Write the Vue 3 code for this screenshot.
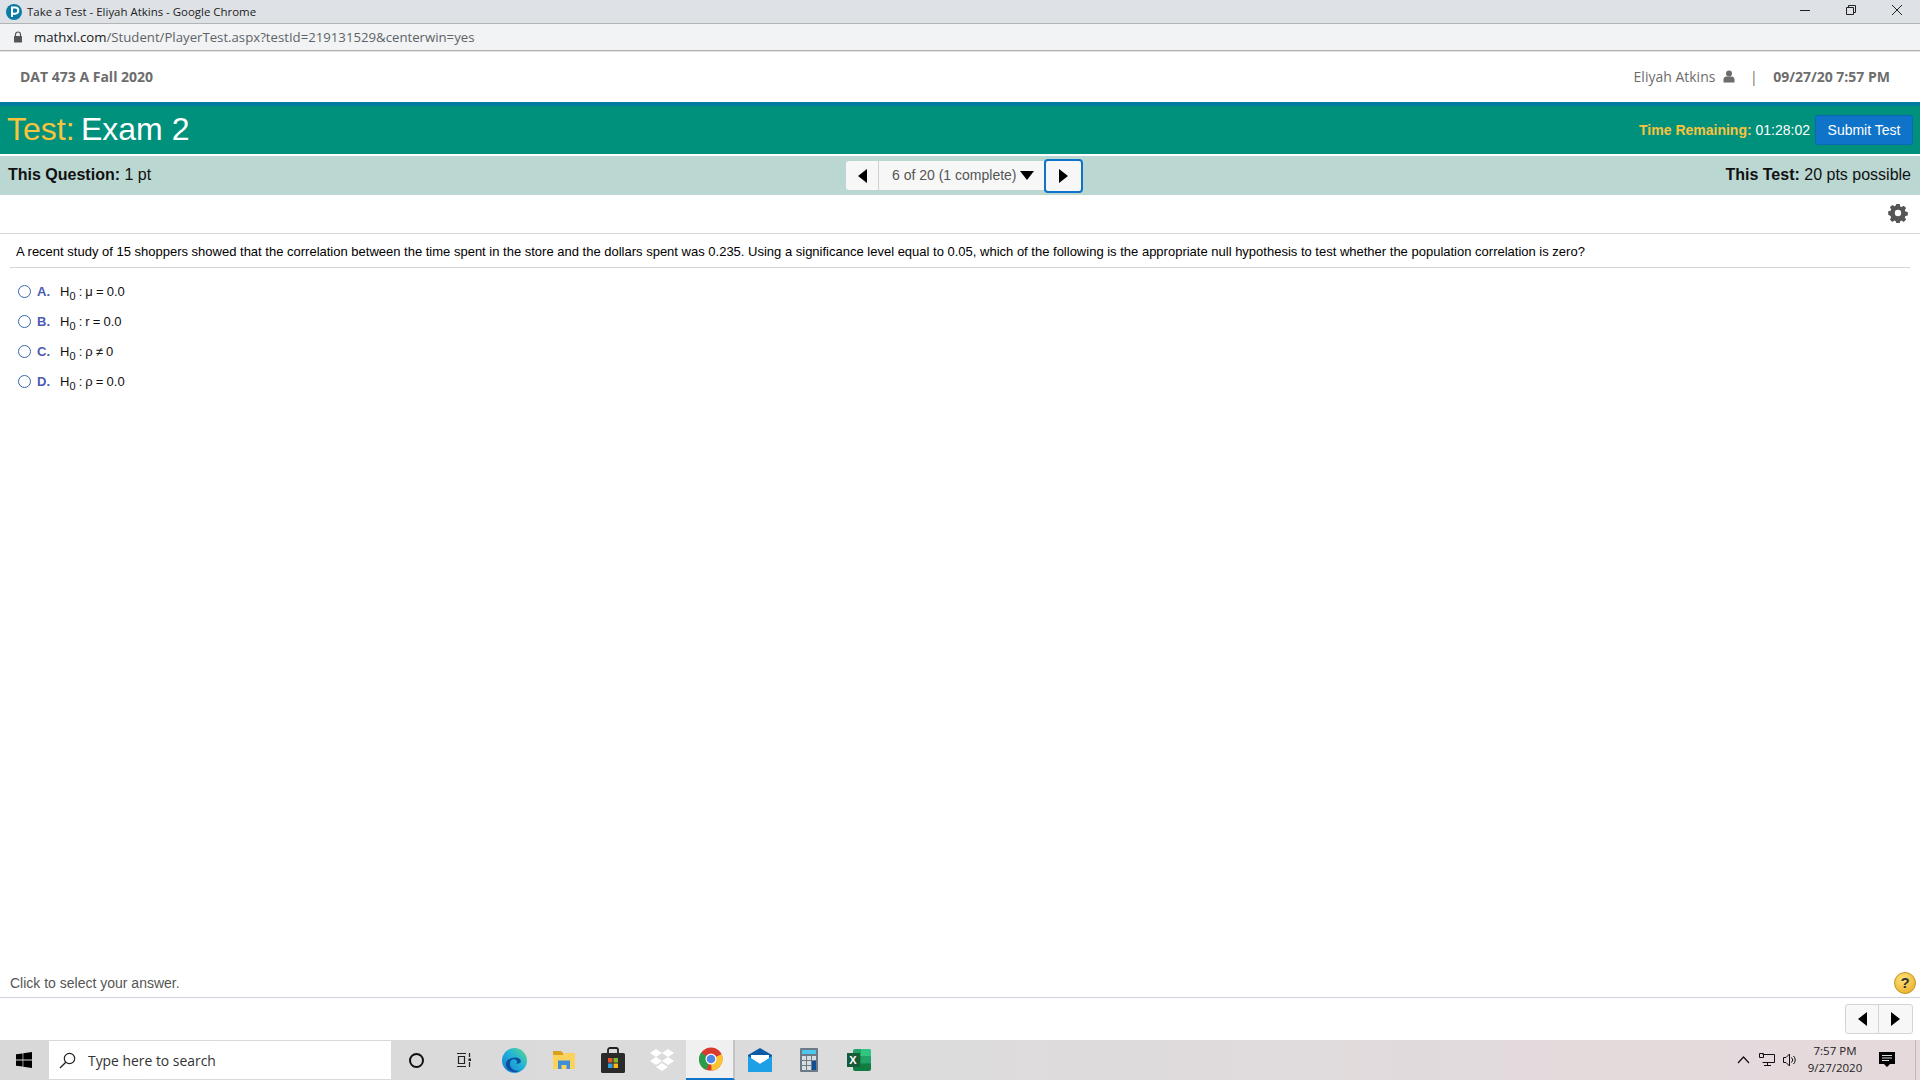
<script setup>
const options = [
  { letter: 'A.', expr: 'μ = 0.0' },
  { letter: 'B.', expr: 'r = 0.0' },
  { letter: 'C.', expr: 'ρ ≠ 0' },
  { letter: 'D.', expr: 'ρ = 0.0' }
]
</script>

<template>
  <div class="screen">
    <div class="titlebar">
      <svg class="favicon" viewBox="0 0 16 16"><circle cx="8" cy="8" r="8" fill="#0a7ba5"/><path d="M6 13V3.500h3.200a3 3 0 0 1 0 6.200H6" fill="none" stroke="#fff" stroke-width="2"/></svg>
      <span class="title-text">Take a Test - Eliyah Atkins - Google Chrome</span>
      <div class="win-controls">
        <svg width="12" height="12" viewBox="0 0 12 12"><path d="M1 6.500h10" stroke="#222" fill="none"/></svg>
        <svg width="12" height="12" viewBox="0 0 12 12"><path d="M1.500 3.500h7v7h-7zM3.500 3.500v-2h7v7h-2" stroke="#222" fill="none"/></svg>
        <svg width="12" height="12" viewBox="0 0 12 12"><path d="M1 1l10 10M11 1L1 11" stroke="#222" fill="none"/></svg>
      </div>
    </div>
    <div class="urlbar">
      <svg class="lock" width="10" height="12" viewBox="0 0 10 12"><path d="M2.500 5V3.500a2.500 2.500 0 0 1 5 0V5" fill="none" stroke="#555" stroke-width="1.200"/><rect x="1" y="5" width="8" height="6.500" rx=".5" fill="#555"/></svg>
      <span class="url"><span class="host">mathxl.com</span>/Student/PlayerTest.aspx?testId=219131529&amp;centerwin=yes</span>
    </div>

    <header class="course">
      <span class="course-name">DAT 473 A Fall 2020</span>
      <div class="user">
        <span class="user-name">Eliyah Atkins</span>
        <svg class="person" width="12" height="13" viewBox="0 0 12 13"><circle cx="6" cy="3.500" r="3" fill="#6d6d6d"/><path d="M.5 12.500V9.500c0-2 1.500-3 2.800-3h5.400c1.300 0 2.800 1 2.800 3v3z" fill="#6d6d6d"/></svg>
        <span class="sep">|</span>
        <span class="stamp">09/27/20 7:57 PM</span>
      </div>
    </header>

    <div class="testbar">
      <div class="test-title"><span class="gold test-word">Test:</span> Exam 2</div>
      <div class="test-right">
        <span class="time"><b class="gold">Time Remaining:</b> 01:28:02</span>
        <button class="submit">Submit Test</button>
      </div>
    </div>

    <div class="infobar">
      <div class="info-left"><b>This Question:</b> 1 pt</div>
      <div class="pager">
        <div class="pg-btn pg-prev"><span class="tri-left"></span></div>
        <div class="pg-label">6 of 20 (1 complete)<span class="tri-down"></span></div>
        <div class="pg-btn pg-next"><span class="tri-right"></span></div>
      </div>
      <div class="info-right"><b>This Test:</b> 20 pts possible</div>
    </div>

    <div class="toolrow">
      <svg width="20" height="20" viewBox="0 0 20 20"><path fill="#555" fill-rule="evenodd" d="M8.300 1h3.400l.5 2.400 1.400.6 2.100-1.300 2.400 2.400-1.300 2.100.6 1.400 2.400.5v3.400l-2.400.5-.6 1.400 1.300 2.100-2.400 2.400-2.100-1.300-1.400.6-.5 2.400H8.300l-.5-2.400-1.400-.6-2.100 1.300-2.400-2.400 1.300-2.100-.6-1.400L.2 11.700V8.300l2.400-.5.6-1.400L1.900 4.300l2.400-2.400 2.100 1.300 1.400-.6zM10 6.800a3.200 3.200 0 1 0 0 6.400 3.200 3.200 0 0 0 0-6.400z"/></svg>
    </div>

    <main class="question">
      <p class="stem">A recent study of 15 shoppers showed that the correlation between the time spent in the store and the dollars spent was 0.235. Using a significance level equal to 0.05, which of the following is the appropriate null hypothesis to test whether the population correlation is zero?</p>
      <ul class="choices">
        <li v-for="o in options" :key="o.letter" class="choice">
          <span class="radio"></span>
          <span class="letter">{{ o.letter }}</span>
          <span class="expr">H<sub>0</sub> : {{ o.expr }}</span>
        </li>
      </ul>
    </main>

    <div class="hintrow">
      <span class="hint">Click to select your answer.</span>
      <span class="help">?</span>
    </div>
    <div class="footnav">
      <div class="fn-group">
        <div class="fn-btn"><span class="tri-left"></span></div>
        <div class="fn-btn"><span class="tri-right"></span></div>
      </div>
    </div>

    <footer class="taskbar">
      <div class="start">
        <svg width="16" height="16" viewBox="0 0 16 16"><path fill="#000" d="M0 2.300l6.600-.9v6.200H0zM7.300 1.300L16 0v7.600H7.300zM0 8.400h6.600v6.200L0 13.700zM7.300 8.400H16V16l-8.700-1.300z"/></svg>
      </div>
      <div class="search">
        <svg width="17" height="17" viewBox="0 0 17 17"><circle cx="10.500" cy="6.500" r="5.200" fill="none" stroke="#222" stroke-width="1.200"/><path d="M6.800 10.200L1 16" stroke="#222" stroke-width="1.300"/></svg>
        <span>Type here to search</span>
      </div>
      <div class="tb-icons">
        <div class="tb"><span class="cortana"></span></div>
        <div class="tb"><svg class="taskview" width="16" height="16" viewBox="0 0 16 16"><path d="M1 1.500h9M1 14.500h9M2.500 4.500h6v7h-6zM13.500 1v4M13.500 10v5" fill="none" stroke="#222" stroke-width="1.200"/><rect x="12.500" y="6.500" width="2.500" height="2.500" fill="#222"/></svg></div>
        <div class="tb"><svg width="25" height="25" viewBox="0 0 24 24"><defs><linearGradient id="edgeBg" x1="1" y1="0" x2="0" y2="1"><stop offset="0" stop-color="#5edb87"/><stop offset=".45" stop-color="#22b3d8"/><stop offset="1" stop-color="#1477cf"/></linearGradient></defs><circle cx="12" cy="12" r="12" fill="url(#edgeBg)"/><path d="M12.500 9c4 0 6 2.300 5.500 4.500-.5 1.500-3 1.800-4.500 1.500 1.500-1 1.500-3-.5-3.800-3-1.200-6 1.300-5.500 4.800.6 4 5 6.600 9.500 5.800-5 2.700-11.500.7-13-4.800C2.700 12.500 7.500 9 12.500 9z" fill="#0b4d9e"/></svg></div>
        <div class="tb"><svg width="22" height="18" viewBox="0 0 22 18"><path d="M0 3h9l2-1h11v16H0z" fill="#fbd25e"/><path d="M0 0h8l2 2v2H0z" fill="#d9a21b"/><path d="M5 18V9.500h12V18h-3.500v-4h-5v4z" fill="#3f8fd6"/></svg></div>
        <div class="tb"><svg width="24" height="26" viewBox="0 0 24 26"><path d="M7 7V3a2 2 0 0 1 2-2h6a2 2 0 0 1 2 2v4" fill="none" stroke="#222" stroke-width="1.800"/><rect y="6" width="24" height="20" rx="1.500" fill="#2a2a2a"/><rect x="7" y="11" width="4.500" height="4.500" fill="#e8562a"/><rect x="12.500" y="11" width="4.500" height="4.500" fill="#7eb92a"/><rect x="7" y="16.500" width="4.500" height="4.500" fill="#2b9fe0"/><rect x="12.500" y="16.500" width="4.500" height="4.500" fill="#f6b81a"/></svg></div>
        <div class="tb"><svg width="24" height="23" viewBox="0 0 24 23"><path fill="#fff" d="M6 0l6 4-6 4-6-4zM18 0l6 4-6 4-6-4zM0 12l6-4 6 4-6 4zM12 12l6-4 6 4-6 4zM6 18l6-4 6 4-6 4z"/></svg></div>
        <div class="tb tb-active"><svg width="24" height="24" viewBox="0 0 24 24"><circle cx="12" cy="12" r="11.500" fill="#d93a2e"/><path d="M12 12L22.500 7a11.500 11.500 0 0 1-10 16.500z" fill="#fbc531"/><path d="M12 12L7 23A11.500 11.500 0 0 1 2.200 5.500z" fill="#2d9c48"/><path d="M12 12l10.500-5H12z" fill="#d93a2e"/><circle cx="12" cy="12" r="5.500" fill="#fff"/><circle cx="12" cy="12" r="4.300" fill="#4f86e8"/></svg></div>
        <div class="tb"><svg width="24" height="24" viewBox="0 0 24 24"><path d="M0 7L12 0l12 7v3L12 16 0 10z" fill="#0e5aa7"/><path d="M3 7h18v4l-9 5-9-5z" fill="#fff"/><path d="M0 8l12 8 12-8v16H0z" fill="#1ea0e6"/></svg></div>
        <div class="tb"><svg width="18" height="24" viewBox="0 0 18 24"><rect width="18" height="24" rx="1" fill="#6c7a88"/><rect x="2" y="2" width="14" height="4" fill="#4cc6ec"/><g fill="#d8dde2"><rect x="2" y="8" width="4" height="4"/><rect x="7" y="8" width="4" height="4"/><rect x="12" y="8" width="4" height="4"/><rect x="2" y="13" width="4" height="4"/><rect x="7" y="13" width="4" height="4"/><rect x="2" y="18" width="4" height="4"/><rect x="7" y="18" width="4" height="4"/></g><rect x="12" y="13" width="4" height="9" fill="#0e4f95"/></svg></div>
        <div class="tb"><div class="excel"><span class="x-mark">X</span></div></div>
      </div>
      <div class="tray">
        <svg class="t-caret" width="13" height="8" viewBox="0 0 13 8"><path d="M1 7l5.500-6L12 7" fill="none" stroke="#111" stroke-width="1.200"/></svg>
        <svg class="t-net" width="16" height="14" viewBox="0 0 16 14"><path d="M3.500 1.500H15.500V9.500H3.500M8.500 9.500v3M5 12.500h7M.5.500h4v4h-4z" fill="none" stroke="#111"/></svg>
        <svg class="t-vol" width="15" height="14" viewBox="0 0 15 14"><path d="M.5 4.500h2.500L6.500 1v12L3 9.500H.5z" fill="none" stroke="#111"/><path d="M8.500 4.500a3.500 3.500 0 0 1 0 5M10.500 3a5.500 5.500 0 0 1 0 8" fill="none" stroke="#111"/></svg>
        <div class="clock"><div>7:57 PM</div><div>9/27/2020</div></div>
        <svg class="notif" width="16" height="16" viewBox="0 0 16 16"><path d="M0 0h16v12H11l-3 3-3-3H0z" fill="#000"/><path d="M3 3.500h10M3 6h10M3 8.500h7" stroke="#e4d8dc"/></svg>
        <span class="peek"></span>
      </div>
    </footer>
  </div>
</template>

<style scoped>
.screen { width: 1920px; height: 1080px; display: flex; flex-direction: column; background: #fff; font-family: "Liberation Sans", Arial, sans-serif; overflow: hidden; }
.titlebar { height: 24px; flex: none; display: flex; align-items: center; background: #dee1e6; border-bottom: 1px solid #b4b4b4; box-sizing: border-box; padding-left: 6px; }
.favicon { width: 16px; height: 16px; flex: none; }
.title-text { margin-left: 5px; font: 11.45px "Open Sans", sans-serif; color: #222; }
.win-controls { margin-left: auto; display: flex; gap: 34px; padding: 0 17px 3px 0; align-items: center; }
.urlbar { height: 27px; flex: none; display: flex; align-items: center; background: #f1f3f4; border-bottom: 1px solid #b0b0b0; padding-left: 13px; box-sizing: border-box; }
.url { margin-left: 11px; font: 13.2px "Open Sans", sans-serif; color: #5f6368; }
.host { color: #202124; }
.course { height: 51px; flex: none; display: flex; align-items: center; justify-content: space-between; padding: 0 30px 2px 20px; border-top: 1px solid #e4e4e4; box-sizing: border-box; color: #6d6d6d; font: 14px "Open Sans", sans-serif; }
.course-name, .stamp { font-weight: 700; }
.user { display: flex; align-items: center; }
.person { margin-left: 8px; }
.sep { margin: 0 15.5px 0 14.5px; }
.testbar { height: 52px; flex: none; display: flex; align-items: center; justify-content: space-between; background: #00917c; border-top: 4px solid #007a9e; padding: 0 7px; box-sizing: border-box; color: #fff; }
.test-title { font-size: 32px; margin-top: -2px; }
.test-word { margin-right: -2.5px; }
.gold { color: #f9c33e; }
.test-right { display: flex; align-items: center; gap: 5px; font-size: 14px; }
.submit { width: 98px; height: 30px; background: #0e73c9; color: #fff; border: 1px solid #0c68b6; border-radius: 3px; font: 14px "Liberation Sans", sans-serif; padding: 0; }
.infobar { height: 39px; flex: none; margin-top: 2px; display: grid; grid-template-columns: 1fr auto 1fr; align-items: center; background: #bad7d2; padding: 0 9px 0 8px; font-size: 16px; color: #111; }
.info-left, .info-right { margin-top: -2px; }
.info-right { text-align: right; }
.pager { display: flex; align-items: center; margin-left: 10px; }
.pg-btn { background: #f7f7f7; display: flex; align-items: center; justify-content: center; box-sizing: border-box; }
.pg-prev { width: 33px; height: 29px; border-radius: 3px 0 0 3px; border-right: 1px solid #d0d0d0; }
.pg-label { width: 165px; height: 29px; background: #f7f7f7; display: flex; align-items: center; padding: 0 0 1px 13px; box-sizing: border-box; font-size: 14px; color: #555; }
.pg-next { width: 39px; height: 34px; border: 2px solid #0e73c9; border-radius: 4px; }
.tri-left { width: 0; height: 0; border-style: solid; border-width: 7px 9px 7px 0; border-color: transparent #000 transparent transparent; }
.tri-right { width: 0; height: 0; border-style: solid; border-width: 7px 0 7px 9px; border-color: transparent transparent transparent #000; }
.tri-down { margin: 1px 0 0 3px; width: 0; height: 0; border-style: solid; border-width: 9px 7px 0 7px; border-color: #000 transparent transparent transparent; }
.toolrow { height: 39px; flex: none; display: flex; justify-content: flex-end; align-items: center; padding: 0 12px 2px 0; box-sizing: border-box; border-bottom: 1px solid #d7d7dc; }
.question { flex: 1; padding: 0 10px; min-height: 0; }
.stem { margin: 0; padding: 10px 6px 7px; border-bottom: 1px solid #d4d6dd; font-size: 13px; line-height: 16px; color: #000; }
.choices { list-style: none; margin: 8px 0 0; padding: 0 0 0 8px; }
.choice { height: 30px; display: flex; align-items: center; font-size: 13px; color: #111; }
.radio { width: 13px; height: 13px; border: 1.500px solid #3567ab; border-radius: 50%; box-sizing: border-box; }
.letter { margin-left: 6px; width: 23px; color: #4b5bb3; font-weight: 700; }
.expr { word-spacing: -0.5px; }
.expr sub { font-size: 11px; line-height: 0; }
.hintrow { height: 30px; flex: none; display: flex; align-items: center; justify-content: space-between; padding: 0 4px 0 10px; border-bottom: 1px solid #cfd1dc; font-size: 14px; color: #555; box-sizing: border-box; }
.help { width: 22px; height: 22px; border-radius: 50%; background: radial-gradient(circle at 40% 30%, #fbe27a, #e8a81e); border: 1px solid #c69120; box-sizing: border-box; display: flex; align-items: center; justify-content: center; font-weight: 700; font-size: 15px; color: #333; }
.footnav { height: 42px; flex: none; display: flex; justify-content: flex-end; align-items: center; padding-right: 7px; }
.fn-group { display: flex; border: 1px solid #d4d4d4; border-radius: 3px; background: #f7f7f7; }
.fn-btn { width: 33px; height: 28px; display: flex; align-items: center; justify-content: center; }
.fn-btn:first-child { width: 32px; }
.fn-btn + .fn-btn { border-left: 1px solid #d4d4d4; }
.taskbar { height: 40px; flex: none; display: flex; align-items: stretch; background: linear-gradient(90deg, #d8d8d8 0%, #dcdcdc 45%, #e6d9dc 100%); }
.start { width: 49px; display: flex; align-items: center; justify-content: center; padding-right: 1px; box-sizing: border-box; }
.search { width: 342px; margin: 1px 0; background: #fff; display: flex; align-items: center; padding-left: 10px; box-sizing: border-box; gap: 12px; font: 13.9px "Open Sans", sans-serif; color: #333; }
.tb-icons { display: flex; margin-left: 1px; }
.tb { width: 49px; display: flex; align-items: center; justify-content: center; box-sizing: border-box; }
.taskview { margin-right: 3px; }
.tb-active { background: #f0f0f0; border-bottom: 2px solid #0e73c9; border-right: 2px solid #c4c4c4; padding-left: 2px; }
.cortana { width: 15px; height: 15px; border: 2.500px solid #111; border-radius: 50%; box-sizing: border-box; }
.excel { position: relative; width: 18px; height: 22px; margin-left: 8px; background: linear-gradient(180deg, #21a366 0 33%, #185c37 33% 34%, #1a8a54 34% 66%, #107c41 66%); border-radius: 2px; }
.excel::before { content: ""; position: absolute; right: 0; top: 0; width: 10px; height: 14px; background: linear-gradient(180deg, #33c481 0 50%, #21a366 50%); border-radius: 0 2px 0 0; }
.x-mark { position: absolute; left: -6px; top: 4px; width: 13px; height: 14px; background: #185c37; color: #fff; font-size: 11px; font-weight: 700; text-align: center; line-height: 14px; }
.tray { margin-left: auto; display: flex; align-items: center; padding-right: 4px; }
.t-net { margin-left: 9px; }
.t-vol { margin-left: 8px; }
.clock { margin-left: 7px; width: 60px; padding-bottom: 2px; text-align: center; font: 11.5px/17px "Open Sans", sans-serif; color: #222; }
.notif { margin-left: 14px; }
.peek { margin-left: 20px; width: 1px; height: 40px; background: #bbb; }
</style>

<style>
html, body { margin: 0; padding: 0; background: #fff; }
</style>
